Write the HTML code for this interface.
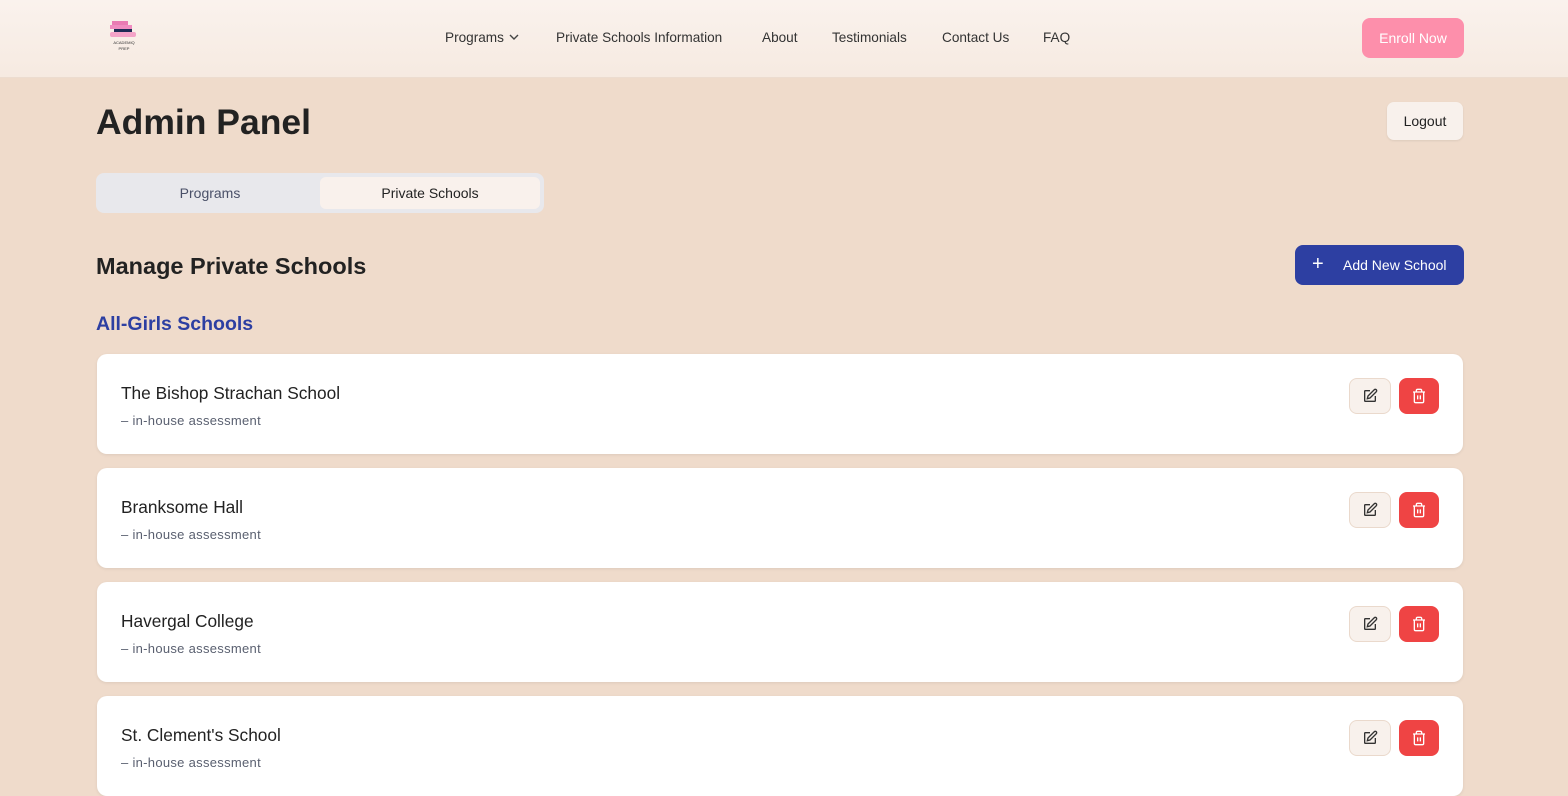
<!DOCTYPE html>
<html><head><style>
*{box-sizing:border-box;margin:0;padding:0}
body{width:1568px;height:777px;overflow:hidden;background:#efdbcb;font-family:"Liberation Sans",sans-serif;color:#222;}
.hdr{height:78px;background:linear-gradient(#faf2ed,#f6eae1);position:relative;border-bottom:1px solid #ecdcd0}
.nav{position:absolute;top:30px;left:445px;font-size:13.6px;color:#333}
.nav span{position:absolute;white-space:nowrap}
.enroll{position:absolute;left:1362px;top:18px;width:102px;height:40px;background:#fd8fab;color:#fff;border-radius:8px;font-size:14px;text-align:center;line-height:40px}
h1{position:absolute;left:96px;top:102px;font-size:35.5px;font-weight:bold;color:#222}
.logout{position:absolute;left:1387px;top:102px;width:76px;height:38px;background:#f8f1ec;border-radius:7px;font-size:14px;text-align:center;line-height:38px;box-shadow:0 1px 2px rgba(0,0,0,.08)}
.tabs{position:absolute;left:96px;top:173px;width:448px;height:40px;background:#e8e8ec;border-radius:8px}
.tab{position:absolute;top:4px;height:32px;width:220px;text-align:center;line-height:32px;font-size:14px}
h2{position:absolute;left:96px;top:253px;font-size:23.5px;font-weight:bold}
.add{position:absolute;left:1295px;top:245px;width:169px;height:40px;background:#2d3fa2;color:#fff;border-radius:8px;font-size:14px;line-height:40px}
h3{position:absolute;left:96px;top:313px;font-size:19.5px;font-weight:bold;color:#2d3fa2}
.card{position:absolute;left:97px;width:1366px;height:100px;background:#fff;border-radius:10px;box-shadow:0 1px 3px rgba(0,0,0,.08)}
.card .t{position:absolute;left:24px;top:29px;font-size:17.3px;color:#222}
.card .s{position:absolute;left:24px;top:59px;font-size:13px;color:#5a6070;letter-spacing:.3px}
.e{position:absolute;left:1252px;top:24px;width:42px;height:36px;background:#f8f1ec;border:1px solid #ead9cc;border-radius:8px}
.d{position:absolute;left:1302px;top:24px;width:40px;height:36px;background:#ef4444;border-radius:8px}
.e svg,.d svg{position:absolute;left:50%;top:50%;transform:translate(-50%,-50%)}
</style></head><body>
<div class="hdr">
<svg style="position:absolute;left:108px;top:20px" width="32" height="32" viewBox="0 0 32 32"><rect x="4" y="1" width="16" height="4" fill="#e97bb3"/><rect x="2" y="5" width="22" height="4" fill="#f08cc0"/><rect x="6" y="9" width="18" height="3" fill="#1e2b55"/><rect x="2" y="12" width="26" height="5" rx="2" fill="#f4a3c8"/><text x="16" y="24" font-size="4" text-anchor="middle" fill="#333">ACADEMIQ</text><text x="16" y="30" font-size="4" text-anchor="middle" fill="#333">PREP</text></svg>
<div class="nav">
<span style="left:0">Programs <svg width="12" height="10" viewBox="0 0 12 10"><path d="M2 3l4 4 4-4" stroke="#444" stroke-width="1.4" fill="none"/></svg></span>
<span style="left:111px">Private Schools Information</span>
<span style="left:317px">About</span>
<span style="left:387px">Testimonials</span>
<span style="left:497px">Contact Us</span>
<span style="left:598px">FAQ</span>
</div>
<div class="enroll">Enroll Now</div>
</div>
<h1>Admin Panel</h1>
<div class="logout">Logout</div>
<div class="tabs"><div class="tab" style="left:4px;color:#4a5068">Programs</div><div class="tab" style="left:224px;background:#f9f1ec;border-radius:6px;color:#222">Private Schools</div></div>
<h2>Manage Private Schools</h2>
<div class="add"><span style="position:absolute;left:17px;font-size:20px;top:-1px">+</span><span style="position:absolute;left:48px">Add New School</span></div>
<h3>All-Girls Schools</h3>
<div class="card" style="top:354px"><div class="t">The Bishop Strachan School</div><div class="s">– in-house assessment</div><div class="e"><svg width="16" height="16" viewBox="0 0 24 24" fill="none" stroke="#333" stroke-width="2"><path d="M12 4H5a1 1 0 0 0-1 1v14a1 1 0 0 0 1 1h14a1 1 0 0 0 1-1v-7"/><path d="M18.4 2.6a2 2 0 0 1 3 3L12 15l-4 1 1-4z"/></svg></div><div class="d"><svg width="16" height="16" viewBox="0 0 24 24" fill="none" stroke="#fff" stroke-width="2"><path d="M3 6h18M19 6v14a2 2 0 0 1-2 2H7a2 2 0 0 1-2-2V6M8 6V4a2 2 0 0 1 2-2h4a2 2 0 0 1 2 2v2M10 11v6M14 11v6"/></svg></div></div>
<div class="card" style="top:468px"><div class="t">Branksome Hall</div><div class="s">– in-house assessment</div><div class="e"><svg width="16" height="16" viewBox="0 0 24 24" fill="none" stroke="#333" stroke-width="2"><path d="M12 4H5a1 1 0 0 0-1 1v14a1 1 0 0 0 1 1h14a1 1 0 0 0 1-1v-7"/><path d="M18.4 2.6a2 2 0 0 1 3 3L12 15l-4 1 1-4z"/></svg></div><div class="d"><svg width="16" height="16" viewBox="0 0 24 24" fill="none" stroke="#fff" stroke-width="2"><path d="M3 6h18M19 6v14a2 2 0 0 1-2 2H7a2 2 0 0 1-2-2V6M8 6V4a2 2 0 0 1 2-2h4a2 2 0 0 1 2 2v2M10 11v6M14 11v6"/></svg></div></div>
<div class="card" style="top:582px"><div class="t">Havergal College</div><div class="s">– in-house assessment</div><div class="e"><svg width="16" height="16" viewBox="0 0 24 24" fill="none" stroke="#333" stroke-width="2"><path d="M12 4H5a1 1 0 0 0-1 1v14a1 1 0 0 0 1 1h14a1 1 0 0 0 1-1v-7"/><path d="M18.4 2.6a2 2 0 0 1 3 3L12 15l-4 1 1-4z"/></svg></div><div class="d"><svg width="16" height="16" viewBox="0 0 24 24" fill="none" stroke="#fff" stroke-width="2"><path d="M3 6h18M19 6v14a2 2 0 0 1-2 2H7a2 2 0 0 1-2-2V6M8 6V4a2 2 0 0 1 2-2h4a2 2 0 0 1 2 2v2M10 11v6M14 11v6"/></svg></div></div>
<div class="card" style="top:696px"><div class="t">St. Clement's School</div><div class="s">– in-house assessment</div><div class="e"><svg width="16" height="16" viewBox="0 0 24 24" fill="none" stroke="#333" stroke-width="2"><path d="M12 4H5a1 1 0 0 0-1 1v14a1 1 0 0 0 1 1h14a1 1 0 0 0 1-1v-7"/><path d="M18.4 2.6a2 2 0 0 1 3 3L12 15l-4 1 1-4z"/></svg></div><div class="d"><svg width="16" height="16" viewBox="0 0 24 24" fill="none" stroke="#fff" stroke-width="2"><path d="M3 6h18M19 6v14a2 2 0 0 1-2 2H7a2 2 0 0 1-2-2V6M8 6V4a2 2 0 0 1 2-2h4a2 2 0 0 1 2 2v2M10 11v6M14 11v6"/></svg></div></div>
</body></html>
